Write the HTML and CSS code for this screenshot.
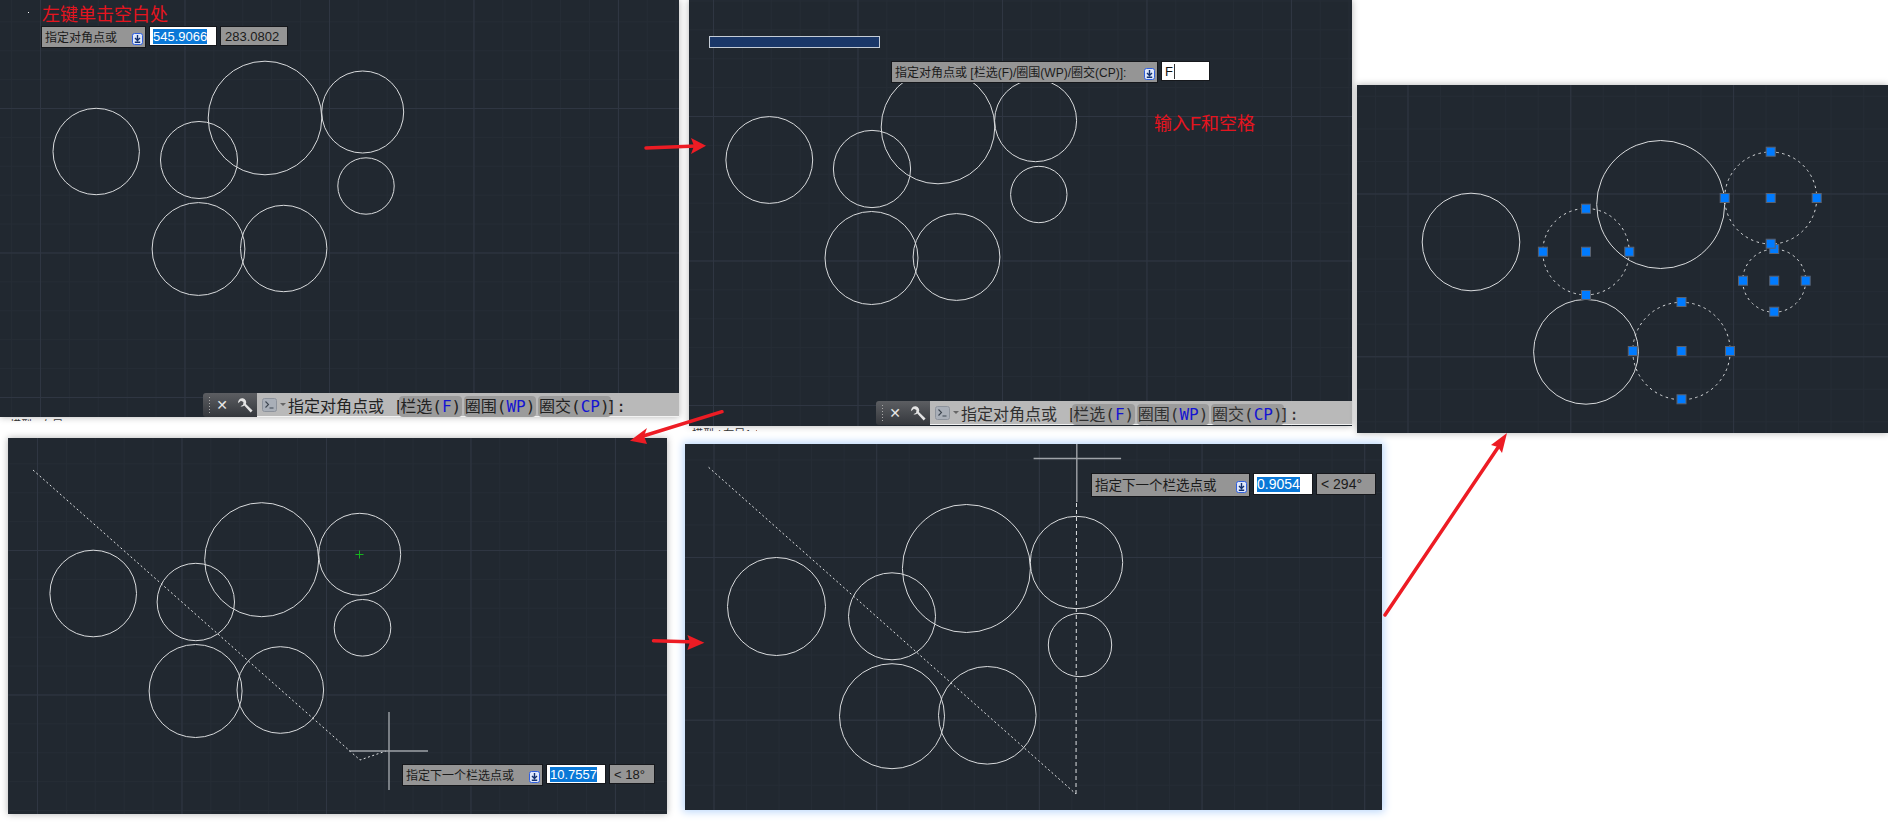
FILE: index.html
```html
<!DOCTYPE html>
<html>
<head>
  <title>选择对象 - 栏选步骤</title>
  <link rel="stylesheet" href="styles.css">
</head>
<body>
  <svg class="defs" width="0" height="0">
    <symbol id="dl" viewBox="0 0 11 12">
      <rect x="0.5" y="0.5" width="10" height="11" rx="2" fill="#dfe8fb" stroke="#2f5fe0"/>
      <path d="M5.5 2v5M3 5l2.5 2.5L8 5M2.8 9.3h5.4" fill="none" stroke="#12306e" stroke-width="1.4"/>
    </symbol>
    <symbol id="wrench" viewBox="0 0 16 16">
      <path d="M6.5 1.2A4 4 0 0 0 2 5.8L4.6 3.6l2.4 1-0.3 2.6-2.5 1.5a4 4 0 0 0 3.6-0.6l6 6.4 1.8-1.8-6.3-6A4 4 0 0 0 6.5 1.2z" fill="#e4e4e4"/>
    </symbol>
    <symbol id="prompt" viewBox="0 0 15 14">
      <rect x="0.5" y="0.5" width="14" height="13" rx="2" fill="#a9afb8" stroke="#8d939c"/>
      <path d="M3.5 3.5l3 3-3 3M7.5 10h4" fill="none" stroke="#3d4650" stroke-width="1.1"/>
    </symbol>
    <rect id="g" x="-4.5" y="-4.5" width="9" height="9" class="grip"/>
  </svg>

  <!-- 1: left click an empty spot -->
  <div class="panel p1">
    <svg class="drawing" viewBox="0 0 679 417">
      <circle class="ent" cx="96.2" cy="151.5" r="43.2"/>
      <circle class="ent" cx="199" cy="160" r="38.5"/>
      <circle class="ent" cx="265" cy="118" r="56.8"/>
      <circle class="ent" cx="362.7" cy="112" r="41"/>
      <circle class="ent" cx="366" cy="186" r="28.2"/>
      <circle class="ent" cx="198.5" cy="249" r="46.4"/>
      <circle class="ent" cx="283.7" cy="248.5" r="43.2"/>
      <rect x="28" y="12" width="1" height="1" fill="#fff"/>
    </svg>
    <div class="note note-p1">左键单击空白处</div>
    <div class="dyn dyn-p1">
      <div class="dyn-prompt w-105"><span>指定对角点或</span><svg class="dl"><use href="#dl"/></svg></div>
      <div class="dyn-input w-68"><span class="sel">545.9066</span></div>
      <div class="dyn-field w-68">283.0802</div>
    </div>
    <div class="cmd cmd-p1">
      <div class="cmd-tools">
        <span class="cmd-grip"></span>
        <span class="cmd-x">✕</span>
        <svg class="cmd-wrench"><use href="#wrench"/></svg>
      </div>
      <div class="cmd-line">
        <svg class="cmd-icon"><use href="#prompt"/></svg>
        <span class="cmd-caret"></span>
        <span class="cmd-text">指定对角点或 [<span class="chip">栏选(<b>F</b>)</span> <span class="chip">圈围(<b>WP</b>)</span> <span class="chip">圈交(<b>CP</b>)</span>]:</span>
      </div>
    </div>
  </div>
  <div class="tabs tabs-p1">模型 / 布局1 /</div>

  <!-- 2: type F and space -->
  <div class="panel p2">
    <svg class="drawing" viewBox="689 0 663 426">
      <circle class="ent" cx="769.3" cy="160" r="43.4"/>
      <circle class="ent" cx="872" cy="169" r="38.6"/>
      <circle class="ent" cx="938" cy="127" r="56.8"/>
      <circle class="ent" cx="1035.6" cy="120.7" r="41"/>
      <circle class="ent" cx="1038.8" cy="194.5" r="28.2"/>
      <circle class="ent" cx="871.5" cy="258" r="46.5"/>
      <circle class="ent" cx="956.5" cy="257" r="43.4"/>
      <rect class="pick" x="709.5" y="36.5" width="170" height="11"/>
    </svg>
    <div class="note note-p2">输入F和空格</div>
    <div class="dyn dyn-p2">
      <div class="dyn-prompt w-267"><span>指定对角点或 [栏选(F)/圈围(WP)/圈交(CP)]:</span><svg class="dl"><use href="#dl"/></svg></div>
      <div class="dyn-input w-49"><span class="typed">F</span></div>
    </div>
    <div class="cmd cmd-p2">
      <div class="cmd-tools">
        <span class="cmd-grip"></span>
        <span class="cmd-x">✕</span>
        <svg class="cmd-wrench"><use href="#wrench"/></svg>
      </div>
      <div class="cmd-line">
        <svg class="cmd-icon"><use href="#prompt"/></svg>
        <span class="cmd-caret"></span>
        <span class="cmd-text">指定对角点或 [<span class="chip">栏选(<b>F</b>)</span> <span class="chip">圈围(<b>WP</b>)</span> <span class="chip">圈交(<b>CP</b>)</span>]:</span>
      </div>
    </div>
  </div>
  <div class="tabs tabs-p2">模型 / 布局1 /</div>

  <!-- 3: selected circles with grips -->
  <div class="panel p3">
    <svg class="drawing" viewBox="1357 85 531 348">
      <circle class="ent" cx="1471" cy="242" r="48.8"/>
      <circle class="ent" cx="1660.7" cy="204.5" r="64"/>
      <circle class="ent" cx="1586" cy="351.8" r="52.4"/>
      <circle class="ent dash" cx="1586" cy="251.7" r="43.2"/>
      <circle class="ent dash" cx="1770.7" cy="198" r="46"/>
      <circle class="ent dash" cx="1774.2" cy="280.7" r="31.5"/>
      <circle class="ent dash" cx="1681.5" cy="351" r="48.7"/>
      <use href="#g" x="1586" y="251.7"/><use href="#g" x="1542.9" y="251.7"/><use href="#g" x="1629.3" y="251.7"/><use href="#g" x="1586" y="208.7"/><use href="#g" x="1586" y="295"/>
      <use href="#g" x="1774.2" y="280.7"/><use href="#g" x="1743" y="280.7"/><use href="#g" x="1805.7" y="280.7"/><use href="#g" x="1774.2" y="249"/><use href="#g" x="1774.2" y="311.7"/>
      <use href="#g" x="1770.7" y="198"/><use href="#g" x="1724.7" y="198"/><use href="#g" x="1816.7" y="198"/><use href="#g" x="1770.7" y="151.7"/><use href="#g" x="1770.7" y="243.7"/>
      <use href="#g" x="1681.5" y="351"/><use href="#g" x="1632.8" y="351"/><use href="#g" x="1730" y="351"/><use href="#g" x="1681.5" y="302"/><use href="#g" x="1681.5" y="399.3"/>
    </svg>
  </div>

  <!-- 4: first fence segment -->
  <div class="panel p4">
    <svg class="drawing" viewBox="8 438 659 376">
      <circle class="ent" cx="93.2" cy="593.5" r="43.3"/>
      <circle class="ent" cx="195.8" cy="602" r="38.7"/>
      <circle class="ent" cx="261.7" cy="559.7" r="57"/>
      <circle class="ent" cx="359.7" cy="554.3" r="41"/>
      <circle class="ent" cx="362.5" cy="627.8" r="28.3"/>
      <circle class="ent" cx="195.6" cy="691" r="46.5"/>
      <circle class="ent" cx="280.3" cy="690" r="43.3"/>
      <polyline class="fence" points="33,470 360,760 386,751"/>
      <path class="cross" d="M349 751h79M389 712v78"/>
      <path class="snap" d="M355.5 554.5h8M359.5 550.5v8"/>
    </svg>
    <div class="dyn dyn-p4">
      <div class="dyn-prompt w-141"><span>指定下一个栏选点或</span><svg class="dl"><use href="#dl"/></svg></div>
      <div class="dyn-input w-60"><span class="sel">10.7557</span></div>
      <div class="dyn-field w-46">&lt; 18°</div>
    </div>
  </div>

  <!-- 5: second fence segment -->
  <div class="panel p5">
    <svg class="drawing" viewBox="685 444 697 366">
      <circle class="ent" cx="776.5" cy="606.5" r="49"/>
      <circle class="ent" cx="892" cy="616.3" r="43.5"/>
      <circle class="ent" cx="966.4" cy="568.5" r="64"/>
      <circle class="ent" cx="1076.5" cy="562.5" r="46.2"/>
      <circle class="ent" cx="1080" cy="645" r="31.7"/>
      <circle class="ent" cx="892" cy="716.2" r="52.5"/>
      <circle class="ent" cx="987.3" cy="715.3" r="48.8"/>
      <polyline class="fence" points="708.6,467.3 1076,794"/>
      <path class="fence fence-long" d="M1076 794L1076.5 502"/>
      <path class="cross" d="M1033.6 458.5h87.5M1076.8 444v58"/>
    </svg>
    <div class="dyn dyn-p5">
      <div class="dyn-prompt w-159"><span>指定下一个栏选点或</span><svg class="dl"><use href="#dl"/></svg></div>
      <div class="dyn-input w-60"><span class="sel">0.9054</span></div>
      <div class="dyn-field w-60">&lt; 294°</div>
    </div>
  </div>

  <!-- red arrows between the steps -->
  <svg class="arrows" viewBox="0 0 1888 840">
    <path class="arrow-line" d="M646 148L696 146"/>
    <polygon class="arrow-head" points="706,145.7 691,138 694,146 691,154"/>
    <path class="arrow-line" d="M722 411.7L640 437"/>
    <polygon class="arrow-head" points="630,440.7 647,428 644,436 647,444"/>
    <path class="arrow-line" d="M653.5 640.7L696 642"/>
    <polygon class="arrow-head" points="704.4,642.7 687.4,635 690,642 687.4,650"/>
    <path class="arrow-line" d="M1385 615L1499 446"/>
    <polygon class="arrow-head" points="1507,433 1491,445 1498,447 1502,453"/>
  </svg>
</body>
</html>
```

FILE: styles.css
```css
html, body {
  margin: 0;
  height: 840px;
  overflow: hidden;
  background-color: #fff;
  font-family: "Liberation Sans", "Noto Sans CJK SC", sans-serif;
}
.defs {
  position: absolute;
}
.grip {
  fill: #007bff;
  stroke: #5a6270;
  stroke-width: 1;
}

/* drawing windows, placed freely on the sheet */
.panel {
  position: absolute;
  overflow: hidden;
  background-color: #212830;
  --major: #2f3642;
  --minor: #252c35;
  background-image:
    linear-gradient(to right, var(--major) 1px, transparent 1px),
    linear-gradient(to bottom, var(--major) 1px, transparent 1px),
    linear-gradient(to right, var(--minor) 1px, transparent 1px),
    linear-gradient(to bottom, var(--minor) 1px, transparent 1px);
  background-size:
    var(--step) 100%,
    100% var(--step),
    calc(var(--step) / 5) 100%,
    100% calc(var(--step) / 5);
  background-position: var(--gx) 0, 0 var(--gy), var(--gx) 0, 0 var(--gy);
  box-shadow: 0 0 7px rgba(0, 0, 0, 0.3);
}
.p1 {
  left: 0;
  top: 0;
  width: 679px;
  height: 417px;
  --step: 144.5px;
  --gx: 40px;
  --gy: 108px;
}
.p2 {
  left: 689px;
  top: 0;
  width: 663px;
  height: 426px;
  --step: 144.5px;
  --gx: 24px;
  --gy: 116px;
}
.p3 {
  left: 1357px;
  top: 85px;
  width: 531px;
  height: 348px;
  --step: 162.8px;
  --gx: 50.5px;
  --gy: 108.5px;
}
.p4 {
  left: 8px;
  top: 438px;
  width: 659px;
  height: 376px;
  --step: 144.5px;
  --gx: 29px;
  --gy: 112px;
}
.p5 {
  left: 685px;
  top: 444px;
  width: 697px;
  height: 366px;
  --step: 162.7px;
  --gx: 28.5px;
  --gy: 113px;
  box-shadow: 0 0 8px 2px #bcd8fb;
}
.drawing {
  display: block;
  width: 100%;
  height: 100%;
}

/* cad entities */
.ent {
  fill: none;
  stroke: #d9dbdd;
  stroke-width: 1;
}
.dash {
  stroke-dasharray: 2.5 3.5;
}
.fence {
  fill: none;
  stroke: #dfe1e3;
  stroke-width: 1;
  stroke-dasharray: 2 2.5;
}
.fence-long {
  stroke-dasharray: 4 3;
}
.cross {
  fill: none;
  stroke: #9fa3a8;
  stroke-width: 1.4;
}
.snap {
  fill: none;
  stroke: #15b41e;
  stroke-width: 1;
}
.pick {
  fill: #1a3768;
  stroke: #c4ccd6;
  stroke-width: 1;
}

/* red captions */
.note {
  position: absolute;
  color: #e5141f;
  font-size: 18px;
  line-height: 24px;
  white-space: nowrap;
}
.note-p1 {
  left: 42px;
  top: 3px;
}
.note-p2 {
  left: 465px;
  top: 112px;
}

/* dynamic input tooltip */
.dyn {
  position: absolute;
  display: flex;
  align-items: flex-start;
  gap: 3px;
  color: #1b1b1b;
  font-size: 13px;
}
.dyn-p1 {
  left: 41px;
  top: 26px;
}
.dyn-p2 {
  left: 202px;
  top: 61px;
}
.dyn-p4 {
  left: 394px;
  top: 326px;
}
.dyn-p5 {
  left: 406px;
  top: 29px;
  font-size: 14px;
}
.dyn-prompt {
  box-sizing: border-box;
  display: flex;
  align-items: center;
  justify-content: space-between;
  height: 22px;
  padding: 0 2px 2px 3px;
  font-size: 12px;
  white-space: nowrap;
  background-color: #959595;
  border: 1px solid #16181c;
}
.dyn-p5 .dyn-prompt {
  height: 24px;
  font-size: 13.5px;
}
.dyn-prompt .dl {
  flex: none;
  width: 11px;
  height: 12px;
  margin-top: 5px;
}
.dyn-input {
  box-sizing: border-box;
  display: flex;
  align-items: center;
  height: 20px;
  padding: 0 3px;
  background-color: #fff;
  border: 1px solid #16181c;
}
.dyn-p5 .dyn-input,
.dyn-p5 .dyn-field {
  height: 22px;
}
.dyn-field {
  box-sizing: border-box;
  display: flex;
  align-items: center;
  height: 20px;
  padding: 0 4px;
  white-space: nowrap;
  background-color: #959595;
  border: 1px solid #16181c;
}
.sel {
  color: #fff;
  background-color: #0a78d7;
  line-height: 15px;
}
.typed {
  padding-right: 1px;
  color: #111;
  border-right: 1px solid #333;
}
.w-46 { width: 46px; }
.w-49 { width: 49px; }
.w-60 { width: 60px; }
.w-68 { width: 68px; }
.w-105 { width: 105px; }
.w-141 { width: 141px; }
.w-159 { width: 159px; }
.w-267 { width: 267px; }

/* command line */
.cmd {
  position: absolute;
  right: 0;
  bottom: 0;
  display: flex;
  height: 24px;
}
.cmd-p1 {
  left: 203px;
}
.cmd-p2 {
  left: 187px;
  bottom: 1px;
}
.cmd-tools {
  flex: none;
  display: flex;
  align-items: center;
  width: 54px;
  background-image: linear-gradient(to bottom, #5c5e62, #34373c);
  border-radius: 3px 0 0 3px;
}
.cmd-grip {
  width: 4px;
  height: 18px;
  margin-left: 5px;
  background-image: radial-gradient(#a8a8a8 1px, transparent 1px);
  background-size: 3px 3px;
}
.cmd-x {
  width: 12px;
  margin-left: 4px;
  color: #e6e6e6;
  font-size: 14px;
  font-family: "DejaVu Sans", sans-serif;
  text-align: center;
}
.cmd-wrench {
  width: 17px;
  height: 17px;
  margin-left: 8px;
}
.cmd-line {
  flex: 1;
  display: flex;
  align-items: center;
  color: #222;
  background-color: #b9b9b9;
  border-bottom: 1px solid #f2f2f2;
  font-family: "DejaVu Sans Mono", "Noto Sans CJK SC", monospace;
  font-size: 16px;
  white-space: nowrap;
}
.p2 .cmd-line {
  color: #303030;
}
.cmd-icon {
  flex: none;
  width: 15px;
  height: 14px;
  margin-left: 5px;
}
.cmd-caret {
  width: 0;
  height: 0;
  margin: 0 2px 0 3px;
  border-left: 3px solid transparent;
  border-right: 3px solid transparent;
  border-top: 3px solid #666;
}
.chip {
  display: inline-block;
  margin: 0 -4px 0 -4px;
  padding: 0 1px;
  line-height: 21px;
  background-color: #9b9b9b;
  border-radius: 4px;
}
.chip b {
  color: #1414d2;
  font-weight: normal;
}

/* scraps of the layout tabs under windows 1 and 2 */
.tabs {
  position: absolute;
  height: 4px;
  overflow: hidden;
  color: #333;
  font-size: 11px;
  line-height: 14px;
}
.tabs-p1 {
  left: 10px;
  top: 418px;
  height: 3px;
}
.tabs-p2 {
  left: 692px;
  top: 427px;
}

.arrows {
  position: absolute;
  left: 0;
  top: 0;
  width: 1888px;
  height: 840px;
  pointer-events: none;
}
.arrow-line {
  fill: none;
  stroke: #ed1c24;
  stroke-width: 3.5;
  stroke-linecap: round;
}
.arrow-head {
  fill: #ed1c24;
}
```
